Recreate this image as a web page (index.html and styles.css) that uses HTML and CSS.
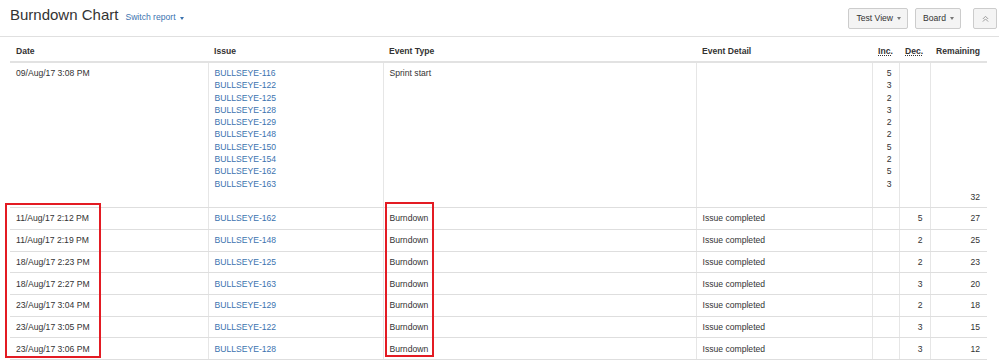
FILE: index.html
```html
<!DOCTYPE html>
<html lang="en">
<head>
  <meta charset="UTF-8">
  <title>Burndown Chart</title>
  <link rel="stylesheet" href="styles.css">
</head>
<body>
  <!-- page header: report title, switcher and board actions -->
  <div class="page-header">
    <div class="title-group">
      <h1>Burndown Chart</h1>
      <a class="switch" href="#">Switch report<span class="caret"></span></a>
    </div>
    <div class="actions">
      <button class="btn">Test View<span class="caret"></span></button>
      <button class="btn">Board<span class="caret"></span></button>
      <button class="btn btn-icon" title="Collapse">
        <svg width="7" height="7" viewBox="0 0 8 8"><path d="M1 4.5 L4 1.5 L7 4.5 M1 7.5 L4 4.5 L7 7.5" fill="none" stroke="#999" stroke-width="1.1"/></svg>
      </button>
    </div>
  </div>

  <div class="report">
    <table class="events">
      <colgroup>
        <col style="width:198px">
        <col style="width:175px">
        <col style="width:313px">
        <col style="width:176px">
        <col style="width:27px">
        <col style="width:31px">
        <col style="width:57px">
      </colgroup>
      <thead>
        <tr>
          <th>Date</th>
          <th>Issue</th>
          <th>Event Type</th>
          <th>Event Detail</th>
          <th><abbr title="Increase">Inc.</abbr></th>
          <th><abbr title="Decrease">Dec.</abbr></th>
          <th>Remaining</th>
        </tr>
      </thead>
      <tbody>
        <tr class="sprint">
          <td>09/Aug/17 3:08 PM</td>
          <td>
            <a href="#">BULLSEYE-116</a><br>
            <a href="#">BULLSEYE-122</a><br>
            <a href="#">BULLSEYE-125</a><br>
            <a href="#">BULLSEYE-128</a><br>
            <a href="#">BULLSEYE-129</a><br>
            <a href="#">BULLSEYE-148</a><br>
            <a href="#">BULLSEYE-150</a><br>
            <a href="#">BULLSEYE-154</a><br>
            <a href="#">BULLSEYE-162</a><br>
            <a href="#">BULLSEYE-163</a>
          </td>
          <td>Sprint start</td>
          <td></td>
          <td class="num">5<br>3<br>2<br>3<br>2<br>2<br>5<br>2<br>5<br>3</td>
          <td class="num"></td>
          <td class="num total">32</td>
        </tr>
        <tr>
          <td>11/Aug/17 2:12 PM</td>
          <td><a href="#">BULLSEYE-162</a></td>
          <td>Burndown</td>
          <td>Issue completed</td>
          <td class="num"></td>
          <td class="num">5</td>
          <td class="num">27</td>
        </tr>
        <tr>
          <td>11/Aug/17 2:19 PM</td>
          <td><a href="#">BULLSEYE-148</a></td>
          <td>Burndown</td>
          <td>Issue completed</td>
          <td class="num"></td>
          <td class="num">2</td>
          <td class="num">25</td>
        </tr>
        <tr>
          <td>18/Aug/17 2:23 PM</td>
          <td><a href="#">BULLSEYE-125</a></td>
          <td>Burndown</td>
          <td>Issue completed</td>
          <td class="num"></td>
          <td class="num">2</td>
          <td class="num">23</td>
        </tr>
        <tr>
          <td>18/Aug/17 2:27 PM</td>
          <td><a href="#">BULLSEYE-163</a></td>
          <td>Burndown</td>
          <td>Issue completed</td>
          <td class="num"></td>
          <td class="num">3</td>
          <td class="num">20</td>
        </tr>
        <tr>
          <td>23/Aug/17 3:04 PM</td>
          <td><a href="#">BULLSEYE-129</a></td>
          <td>Burndown</td>
          <td>Issue completed</td>
          <td class="num"></td>
          <td class="num">2</td>
          <td class="num">18</td>
        </tr>
        <tr>
          <td>23/Aug/17 3:05 PM</td>
          <td><a href="#">BULLSEYE-122</a></td>
          <td>Burndown</td>
          <td>Issue completed</td>
          <td class="num"></td>
          <td class="num">3</td>
          <td class="num">15</td>
        </tr>
        <tr>
          <td>23/Aug/17 3:06 PM</td>
          <td><a href="#">BULLSEYE-128</a></td>
          <td>Burndown</td>
          <td>Issue completed</td>
          <td class="num"></td>
          <td class="num">3</td>
          <td class="num">12</td>
        </tr>
      </tbody>
    </table>

    <!-- red highlight boxes drawn over the table -->
    <div class="mark mark-date"></div>
    <div class="mark mark-type"></div>
  </div>
</body>
</html>
```

FILE: styles.css
```css
/* base */
body {
  margin: 0;
  font-family: "Liberation Sans", Arial, sans-serif;
  font-size: 8.6px;
  line-height: 12.3px;
  color: #333;
  background: #fff;
}
a {
  color: #3b73af;
  text-decoration: none;
}

/* header bar */
.page-header {
  display: flex;
  align-items: center;
  justify-content: space-between;
  height: 37px;
  padding: 0 2px 0 10px;
  border-bottom: 1px solid #e0e0e0;
  box-sizing: border-box;
}
.title-group {
  display: flex;
  align-items: baseline;
  gap: 7px;
  margin-top: -3px;
}
h1 {
  margin: 0;
  font-size: 15px;
  font-weight: normal;
  color: #333;
}
.switch {
  font-size: 8.6px;
}
.caret {
  display: inline-block;
  width: 0;
  height: 0;
  margin-left: 4px;
  vertical-align: middle;
  border-left: 2.5px solid transparent;
  border-right: 2.5px solid transparent;
  border-top: 3px solid currentColor;
}
.actions {
  display: flex;
  gap: 7px;
  align-items: center;
}
.btn {
  height: 21px;
  padding: 0 6px 0 7px;
  font-family: inherit;
  font-size: 8.6px;
  color: #333;
  background: #f4f4f4;
  border: 1px solid #ccc;
  border-radius: 2px;
}
.btn .caret {
  color: #777;
}
.btn-icon {
  width: 24px;
  padding: 0;
  margin-left: 5px;
  display: flex;
  align-items: center;
  justify-content: center;
}

/* event table */
.report {
  position: relative;
  padding: 0 12px 0 10px;
}
.events {
  width: 977px;
  table-layout: fixed;
  border-collapse: collapse;
}
.events th {
  text-align: left;
  font-weight: bold;
  padding: 8px 6px 3.5px;
  border-bottom: 2px solid #e2e2e2;
}
.events abbr {
  text-decoration: underline dotted;
  text-underline-offset: 1px;
}
.events td {
  padding: 4.2px 6px;
  vertical-align: top;
  border-bottom: 1px solid #dedede;
  border-left: 1px solid #e6e6e6;
}
.events td:first-child {
  border-left: none;
}
.events td.num {
  text-align: right;
  padding-right: 7px;
}
.sprint {
  height: 146px;
}
.sprint td.total {
  vertical-align: bottom;
}

/* annotation boxes */
.mark {
  position: absolute;
  border: 2px solid #e31b23;
  box-sizing: border-box;
}
.mark-date {
  left: 5px;
  top: 166px;
  width: 96px;
  height: 155px;
}
.mark-type {
  left: 385px;
  top: 165px;
  width: 49px;
  height: 155px;
}
```
